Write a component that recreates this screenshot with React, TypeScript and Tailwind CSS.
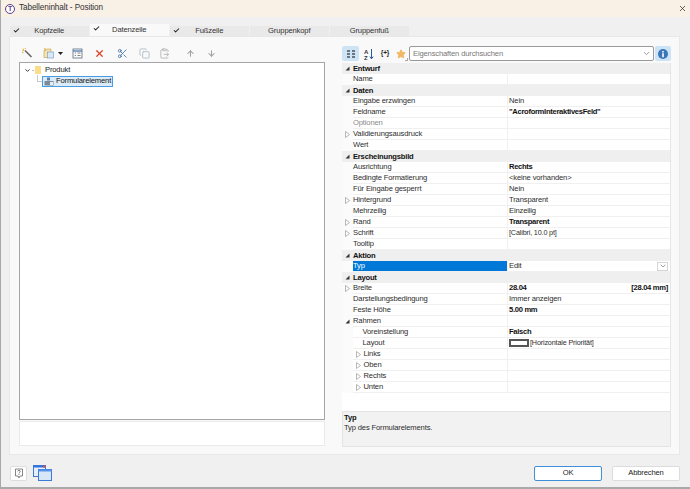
import { Check, X, ChevronDown, Star, ArrowUp, ArrowDown, Scissors, Copy, ClipboardPaste } from "lucide-react";

type Row = {
  label: string;
  value?: string;
  bold?: boolean;
  header?: boolean;
  arrow?: "open" | "closed";
  indent?: boolean;
  muted?: boolean;
  selected?: boolean;
  small?: boolean;
  extra?: string;
  swatch?: boolean;
};

const rows: Row[] = [
  { label: "Entwurf", header: true },
  { label: "Name" },
  { label: "Daten", header: true },
  { label: "Eingabe erzwingen", value: "Nein" },
  { label: "Feldname", value: "\"AcroformInteraktivesFeld\"", bold: true },
  { label: "Optionen", muted: true },
  { label: "Validierungsausdruck", arrow: "closed" },
  { label: "Wert" },
  { label: "Erscheinungsbild", header: true },
  { label: "Ausrichtung", value: "Rechts", bold: true },
  { label: "Bedingte Formatierung", value: "<keine vorhanden>" },
  { label: "Für Eingabe gesperrt", value: "Nein" },
  { label: "Hintergrund", value: "Transparent", arrow: "closed" },
  { label: "Mehrzeilig", value: "Einzeilig" },
  { label: "Rand", value: "Transparent", bold: true, arrow: "closed" },
  { label: "Schrift", value: "[Calibri, 10.0 pt]", arrow: "closed", small: true },
  { label: "Tooltip" },
  { label: "Aktion", header: true },
  { label: "Typ", value: "Edit", selected: true },
  { label: "Layout", header: true },
  { label: "Breite", value: "28.04", bold: true, arrow: "closed", extra: "[28.04 mm]" },
  { label: "Darstellungsbedingung", value: "Immer anzeigen" },
  { label: "Feste Höhe", value: "5.00 mm", bold: true },
  { label: "Rahmen", arrow: "open" },
  { label: "Voreinstellung", value: "Falsch", bold: true, indent: true },
  { label: "Layout", value: "[Horizontale Priorität]", indent: true, swatch: true, small: true },
  { label: "Links", arrow: "closed", indent: true },
  { label: "Oben", arrow: "closed", indent: true },
  { label: "Rechts", arrow: "closed", indent: true },
  { label: "Unten", arrow: "closed", indent: true },
];

const tabs = ["Kopfzeile", "Datenzeile", "Fußzeile", "Gruppenkopf", "Gruppenfuß"];

function Arrow({ kind }: { kind: "open" | "closed" }) {
  if (kind === "open") {
    return (
      <svg width="5" height="5" viewBox="0 0 5 5">
        <path d="M4.5 0.5V4.5H0.5Z" fill="#333" />
      </svg>
    );
  }
  return (
    <svg width="5" height="7" viewBox="0 0 5 7">
      <path d="M0.5 0.5L4.5 3.5L0.5 6.5Z" fill="#fff" stroke="#a5a5a5" strokeWidth="0.8" />
    </svg>
  );
}

function PropertyRow({ row }: { row: Row }) {
  if (row.header) {
    return (
      <div className="flex h-[11px] items-center bg-[#efefef]">
        <span className="flex w-[11px] shrink-0 justify-center"><Arrow kind="open" /></span>
        <span className="font-bold tracking-[-0.2px] text-[#111]">{row.label}</span>
      </div>
    );
  }
  return (
    <div className="flex h-[11px] bg-[#fbfbfb]">
      <div className="flex w-[11px] shrink-0 items-center justify-center">
        {row.arrow && !row.indent && <Arrow kind={row.arrow} />}
      </div>
      <div
        className={`flex w-[154px] shrink-0 items-center border-b border-[#f0f0f0] ${
          row.selected ? "bg-[#0078d7] text-white" : "bg-white"
        } ${row.indent ? "pl-[9.5px]" : ""} ${row.muted ? "text-[#8a8a8a]" : ""}`}
      >
        {row.indent && row.arrow && (
          <span className="mr-[3px] ml-[-7px] flex w-[5px] justify-center"><Arrow kind={row.arrow} /></span>
        )}
        {row.label}
      </div>
      <div className="flex min-w-0 flex-1 items-center justify-between border-b border-l border-[#f0f0f0] bg-white pr-[2px] pl-[1px]">
        <span className={`flex items-center ${row.bold ? "font-bold tracking-[-0.3px] text-[#111]" : ""} ${row.small ? "text-[7.2px]" : ""}`}>
          {row.swatch && <span className="mr-[1px] h-[8px] w-[20px] border-2 border-[#555] bg-white" />}
          {row.value}
        </span>
        {row.extra && <span className="font-bold tracking-[-0.3px] text-[#111]">{row.extra}</span>}
        {row.selected && (
          <span className="flex h-[9px] w-[11px] items-center justify-center border border-[#d5d5d5] bg-white">
            <ChevronDown size={8} color="#777" />
          </span>
        )}
      </div>
    </div>
  );
}

function LeftToolbar() {
  return (
    <div className="flex h-[14px] items-center pl-[2px]">
      <svg width="12" height="12" viewBox="0 0 12 12">
        <path d="M4 3.5L10.5 10" stroke="#666" strokeWidth="1.6" />
        <path d="M2 1.5L3 3.5L1 4M4 1L4.5 2M1 6L2.5 5.5" stroke="#e8b24a" strokeWidth="1" fill="none" />
      </svg>
      <svg className="ml-[10px]" width="11" height="12" viewBox="0 0 11 12">
        <path d="M1 3.5H3L4 2H8V10.5H1Z" fill="#f8e3a8" stroke="#c9a65a" strokeWidth="0.7" />
        <rect x="4.5" y="5" width="6" height="6" fill="#dbe9f7" stroke="#7ba4cf" strokeWidth="0.7" />
        <path d="M2 1V3M1 2H3" stroke="#d9a02e" strokeWidth="0.7" />
      </svg>
      <svg className="ml-[4px]" width="5" height="3" viewBox="0 0 5 3">
        <path d="M0 0H5L2.5 3Z" fill="#222" />
      </svg>
      <svg className="ml-[9px]" width="11" height="11" viewBox="0 0 11 11">
        <rect x="1" y="1" width="9" height="9" fill="#fafafa" stroke="#5c6c80" strokeWidth="0.8" />
        <path d="M1 3H10" stroke="#3b6fa8" strokeWidth="1.2" />
        <path d="M2.8 5H4M5.5 5H8.5M2.8 7.5H4M5.5 7.5H8.5" stroke="#666" strokeWidth="0.8" />
      </svg>
      <X className="ml-[11px]" size={11} color="#d8432b" strokeWidth={2.6} />
      <Scissors className="ml-[12px]" size={11} color="#3d6ea8" strokeWidth={1.8} />
      <Copy className="ml-[11px]" size={11} color="#a9b8c6" strokeWidth={1.8} />
      <ClipboardPaste className="ml-[9px]" size={11} color="#b0b0b0" strokeWidth={1.8} />
      <ArrowUp className="ml-[16px]" size={9} color="#a0a0a0" strokeWidth={2.8} />
      <ArrowDown className="ml-[12px]" size={9} color="#a0a0a0" strokeWidth={2.8} />
    </div>
  );
}

function RightToolbar() {
  return (
    <div className="flex h-[15px] items-center">
      <span className="flex h-[15px] w-[17px] items-center justify-center rounded-[2px] bg-[#cde4f7]">
        <svg width="10" height="10" viewBox="0 0 10 10">
          <path d="M1 1H4V3H1ZM6 1H9V3H6ZM1 4H4V6H1ZM6 4H9V6H6ZM1 7H4V9H1ZM6 7H9V9H6Z" fill="#6d7680" />
        </svg>
      </span>
      <svg className="ml-[5px]" width="10" height="12" viewBox="0 0 10 12">
        <text x="0" y="5.5" fontSize="6" fontWeight="700" fontFamily="Liberation Sans" fill="#333">A</text>
        <text x="0" y="11.5" fontSize="6" fontWeight="700" fontFamily="Liberation Sans" fill="#333">Z</text>
        <path d="M7.5 1V10.5M5.8 8.6L7.5 10.8L9.2 8.6" stroke="#2b5c99" strokeWidth="1" fill="none" />
      </svg>
      <span className="ml-[5px] w-[12px] text-center text-[6.5px] font-bold text-[#222]">{"{+}"}</span>
      <span className="relative ml-[4px] flex h-[12px] w-[12px] items-center justify-center">
        <Star size={10} color="#eeb35c" fill="#f2b866" />
        <span className="absolute right-[-1px] bottom-[-1px] h-[3px] w-[3px] border-r border-b border-[#aaa]" />
      </span>
      <div className="ml-[2px] flex h-[15px] w-[245px] items-center justify-between rounded-[2px] border border-[#9a9a9a] bg-white pr-[2px] pl-[3px] text-[#777]">
        <span>Eigenschaften durchsuchen</span>
        <ChevronDown size={9} color="#777" />
      </div>
      <span className="ml-[1px] flex h-[15px] w-[16px] items-center justify-center rounded-[2px] bg-[#cde4f7]">
        <svg width="10" height="10" viewBox="0 0 10 10">
          <circle cx="5" cy="5" r="5" fill="#3a76b8" />
          <path d="M4.2 2H5.8V3.4H4.2ZM4.2 4.2H5.8V8.2H4.2Z" fill="#fff" />
        </svg>
      </span>
    </div>
  );
}

export default function App() {
  return (
    <div className="flex h-[489px] w-[690px] flex-col overflow-hidden border-b-2 border-l border-[#a9a9a9] bg-[#f0f0f0] font-['Liberation_Sans',sans-serif] text-[7.6px] leading-none tracking-[-0.15px] text-[#2e2e2e]">
      <div className="flex h-[17px] shrink-0 items-center justify-between bg-[#f9f0e6] pr-[3px] pl-[4px]">
        <div className="flex items-center gap-[4px]">
          <span className="flex h-[10px] w-[10px] items-center justify-center rounded-full border border-[#5b3f8e] bg-white text-[7px] font-bold text-[#5b3f8e]">T</span>
          <span className="text-[8.2px] tracking-[-0.1px] text-[#333]">Tabelleninhalt - Position</span>
        </div>
        <X size={9} color="#333" />
      </div>

      <div className="flex h-[9px] shrink-0" />
      <div className="flex h-[10px] shrink-0 items-end gap-[1.5px] pl-[9px]">
        {tabs.map((tab, i) => (
          <div
            key={tab}
            className={`relative flex w-[78.5px] items-center justify-center ${
              i === 1 ? "h-[12px] bg-[#f9f9f9]" : "h-[10px] bg-[#e9e9e9]"
            }`}
          >
            {i < 3 && <Check className="absolute top-[1px] left-[3px]" size={7} color="#222" strokeWidth={3.5} />}
            <span className="text-[#333]">{tab}</span>
          </div>
        ))}
      </div>

      <div className="mr-[10px] ml-[8px] flex h-[419px] shrink-0 gap-[17px] border border-[#e8e8e8] bg-[#f9f9f9] pt-[9px] pr-[7px] pl-[9px]">
        <div className="flex w-[306px] shrink-0 flex-col">
          <LeftToolbar />
          <div className="mt-[2px] h-[358px] border border-[#a5a5a5] bg-white">
            <div className="flex h-[12px] items-center pt-[2px] pl-[4px]">
              <ChevronDown size={7} color="#222" strokeWidth={3} />
              <span className="ml-[1px] h-px w-[2px] bg-[#bbb]" />
              <span className="ml-px h-[8px] w-[6px] bg-[#fbdc8a]" />
              <span className="ml-[4px] text-[#222]">Produkt</span>
            </div>
            <div className="flex h-[12px] items-center pl-[17px]">
              <span className="mb-[6px] h-[7px] w-[5px] border-b border-l border-[#c8c8c8]" />
              <span className="flex h-[11px] items-center border border-[#4a9be0] bg-[#dcebf8] pr-px pl-px text-[#111]">
                <svg width="10" height="9" viewBox="0 0 10 9">
                  <rect x="3" y="0.5" width="3" height="3" fill="#557fb0" />
                  <rect x="0.5" y="4" width="9" height="4.5" fill="#7d8b99" />
                  <rect x="6" y="5" width="3" height="3" fill="#e9eef3" />
                </svg>
                <span className="ml-[2px]">Formularelement</span>
              </span>
            </div>
          </div>
          <div className="mt-[1px] h-[25px] border border-[#eaeaea] bg-white" />
        </div>

        <div className="flex w-[329px] shrink-0 flex-col">
          <RightToolbar />
          <div className="mt-[2px] flex h-[348px] flex-col border-r border-[#e6e6e6] bg-white">
            {rows.map((row, i) => (
              <PropertyRow key={i} row={row} />
            ))}
          </div>
          <div className="h-[36px] border border-[#e4e4e4] bg-[#f2f2f2] pt-[2px] pl-[1px]">
            <div className="font-bold text-[#111]">Typ</div>
            <div className="mt-[2px]">Typ des Formularelements.</div>
          </div>
        </div>
      </div>

      <div className="flex flex-1 items-center justify-between pt-[4px] pr-[10px] pl-[9px]">
        <div className="flex items-center gap-[7px]">
          <span className="flex h-[15px] w-[17px] items-center justify-center rounded-[2px] border border-[#ddd] bg-white">
            <svg width="10" height="11" viewBox="0 0 10 11">
              <path d="M1.5 1H8.5V8H6L5 10L4 8H1.5Z" fill="#fff" stroke="#666" strokeWidth="0.8" />
              <path d="M3.8 3.4C3.8 2 6.2 2 6.2 3.4C6.2 4.4 5 4.4 5 5.4M5 6.2V7" stroke="#555" strokeWidth="0.8" fill="none" />
            </svg>
          </span>
          <svg className="ml-[-1px]" width="19" height="16" viewBox="0 0 19 16">
            <rect x="0.5" y="0.5" width="12" height="11" fill="#e6effb" stroke="#3d7ad6" />
            <rect x="0.5" y="0.5" width="12" height="2" fill="#2f72e0" />
            <rect x="10" y="0.5" width="2.5" height="2" fill="#d9503a" />
            <rect x="5.5" y="4.5" width="13" height="11" fill="#d8e6fa" stroke="#3d7ad6" />
            <rect x="5.5" y="4.5" width="13" height="2" fill="#5b93e8" />
          </svg>
        </div>
        <div className="flex gap-[10px]">
          <button className="h-[15px] w-[68px] rounded-[2px] border border-[#3f8fd8] bg-white text-[7.6px] text-[#222]">OK</button>
          <button className="h-[15px] w-[68px] rounded-[2px] border border-[#dcdcdc] bg-white text-[7.6px] text-[#222]">Abbrechen</button>
        </div>
      </div>
    </div>
  );
}
